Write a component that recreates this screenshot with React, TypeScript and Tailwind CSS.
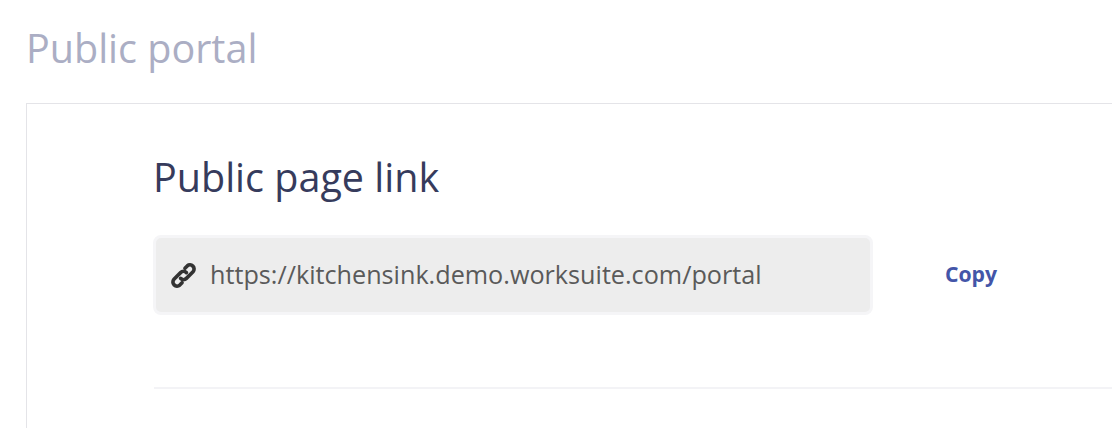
import React from 'react';

const LinkIcon = () => (
  <svg viewBox="0 0 24 24" className="h-[29px] w-[29px] shrink-0 text-[#333333]" fill="none" stroke="currentColor" strokeWidth="3" strokeLinecap="round" strokeLinejoin="round">
    <path d="M13.2 6 15.1 4.1A3.4 3.4 0 0 1 19.9 8.9L14.4 14.4A3.4 3.4 0 0 1 9.6 14.4" />
    <path d="M10.8 18 8.9 19.9A3.4 3.4 0 0 1 4.1 15.1L9.6 9.6A3.4 3.4 0 0 1 14.4 9.6" />
  </svg>
);

const App: React.FC = () => {
  return (
    <div className="h-[428px] w-[1112px] overflow-hidden bg-white pl-[26px] pt-[24px] font-['Open_Sans',sans-serif]">
      <h1 className="text-[39.5px] leading-[48px] font-normal text-[#abaec4]">Public portal</h1>
      <div className="mt-[31px] h-[400px] border-t border-l border-[#e4e4e8] pl-[127px] pt-[47px]">
        <h2 className="-ml-[1px] text-[39.5px] leading-[52px] font-normal text-[#363b5c]">Public page link</h2>
        <div className="mt-[32px] flex items-center">
          <div className="-ml-[1px] flex h-[80px] w-[720px] items-center rounded-[8px] border-[3px] border-[#f5f5f7] bg-[#ededed] pl-[13px]">
            <LinkIcon />
            <span className="ml-[12px] text-[25.2px] text-[#5a5a5a]">https://kitchensink.demo.worksuite.com/portal</span>
          </div>
          <button className="-mt-[2px] ml-[72px] text-[21.2px] font-bold text-[#4355a8]">Copy</button>
        </div>
        <div className="mt-[72px] h-[2px] bg-[#f3f3f6]" />
      </div>
    </div>
  );
};

export default App;
